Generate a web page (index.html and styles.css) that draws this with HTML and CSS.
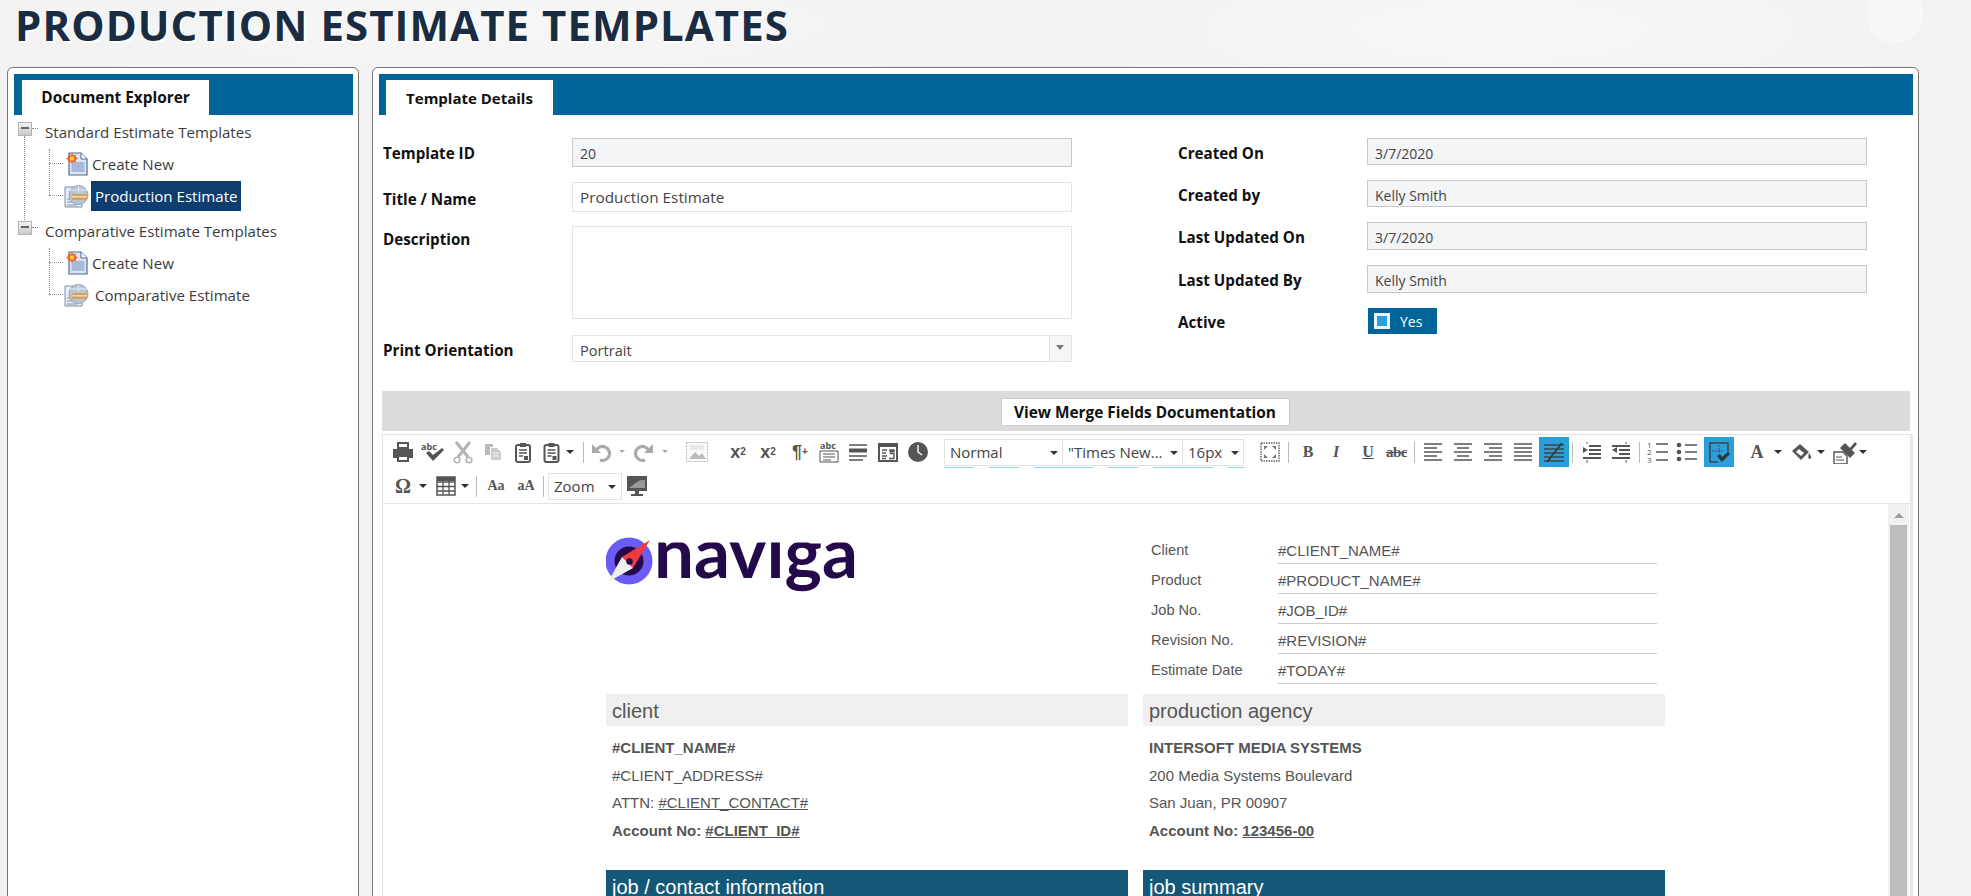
FILE: index.html
```html
<!DOCTYPE html>
<html lang="en">
<head>
    <meta charset="UTF-8">
    <title>Production Estimate Templates</title>
    <link rel="stylesheet" href="styles.css">
</head>
<body>
    <svg class="defs" xmlns="http://www.w3.org/2000/svg">
        <symbol id="i-newdoc" viewBox="0 0 22 24">
            <path d="M3 1h12l6 6v16H3z" fill="#dfe6f2" stroke="#4d6a92" stroke-width="1.2"/>
            <path d="M15 1v6h6" fill="#fff" stroke="#4d6a92"/>
            <rect x="5.5" y="10" width="13" height="10" fill="#a9b9dc"/>
            <path d="M6 1l1.5 2.5L10 2.5 9.5 5l2.5 1.5L9.500 8 10 10.500 7.500 9.500 6 12 4.500 9.500 2 10.500 2.500 8 0 6.500 2.500 5 2 2.500 4.500 3.500z" fill="#ef5d2a"/>
            <circle cx="6" cy="6.500" r="2.200" fill="#f8d22d"/>
        </symbol>
        <symbol id="i-globedoc" viewBox="0 0 25 24">
            <path d="M1 3h13l4 3v17H1z" fill="#e9eef5" stroke="#7d8ea6"/>
            <path d="M3 15h8M3 18h8M3 21h10" stroke="#7d8ea6"/>
            <circle cx="14.500" cy="11" r="9.500" fill="#b7c6d6" stroke="#98a4b2"/>
            <path d="M6 6h17M14.500 2v7" stroke="#e4eaf0" fill="none"/>
            <rect x="8" y="10" width="15" height="6" fill="#d3a263"/>
            <rect x="8" y="12" width="15" height="1.500" fill="#f1d9ae"/>
        </symbol>
        <symbol id="i-print" viewBox="0 0 24 24">
            <path d="M7 3h10v5H7z" fill="#fff" stroke="#555" stroke-width="2"/>
            <path d="M2 9h20v9h-4v-3H6v3H2z" fill="#555"/>
            <path d="M7 16h10v5H7z" fill="#fff" stroke="#555" stroke-width="2"/>
        </symbol>
        <symbol id="i-spell" viewBox="0 0 24 24">
            <text x="0" y="10" class="ic-small">abc</text>
            <path d="M5 13l3-2 4 4 9-7 2 2-11 11z" fill="#555"/>
        </symbol>
        <symbol id="i-cut" viewBox="0 0 24 24">
            <path d="M5 2l12 15M19 2L7 17" stroke="#b4b4b4" stroke-width="3" fill="none"/>
            <circle cx="6" cy="20" r="2.800" fill="none" stroke="#b4b4b4" stroke-width="1.600"/>
            <circle cx="18" cy="20" r="2.800" fill="none" stroke="#b4b4b4" stroke-width="1.600"/>
        </symbol>
        <symbol id="i-copy" viewBox="0 0 24 24">
            <path d="M4 4h8v3H9v8H4z" fill="#bbb"/>
            <path d="M10 8h6l4 4v8H10z" fill="#ccc"/>
            <path d="M12 13h6M12 16h6" stroke="#fff"/>
        </symbol>
        <symbol id="i-paste" viewBox="0 0 24 24">
            <rect x="5" y="5" width="14" height="17" rx="2" fill="#fff" stroke="#555" stroke-width="2"/>
            <path d="M9 3h6v4H9z" fill="#555"/>
            <path d="M8 10h8M8 13h8M8 16h4" stroke="#555" stroke-width="1.500"/>
            <rect x="13" y="16" width="4" height="4" fill="#555"/>
        </symbol>
        <symbol id="i-undo" viewBox="0 0 24 24">
            <path d="M6 11a7 7 0 1 1 4 9" fill="none" stroke="#aaa" stroke-width="3.200"/>
            <path d="M2 4v9h9z" fill="#aaa"/>
        </symbol>
        <symbol id="i-redo" viewBox="0 0 24 24">
            <path d="M18 11a7 7 0 1 0-4 9" fill="none" stroke="#aaa" stroke-width="3.200"/>
            <path d="M22 4v9h-9z" fill="#aaa"/>
        </symbol>
        <symbol id="i-image" viewBox="0 0 24 24">
            <rect x="1.500" y="2.500" width="21" height="19" fill="#fafafa" stroke="#bbb" stroke-dasharray="2 1"/>
            <path d="M4 19l6-7 4 4 3-3 4 6z" fill="#bbb"/>
            <rect x="5" y="5" width="14" height="5" fill="#e9e9e9"/>
        </symbol>
        <symbol id="i-abclines" viewBox="0 0 24 24">
            <text x="3" y="9" class="ic-small">abc</text>
            <path d="M3 11h18v11H3zM6 14h12M6 17h12M6 20h8" fill="none" stroke="#555"/>
        </symbol>
        <symbol id="i-lines" viewBox="0 0 24 24">
            <path d="M3 5h18M3 16h18M3 20h14" stroke="#555" stroke-width="1.500"/>
            <path d="M3 10.500h18" stroke="#555" stroke-width="4"/>
        </symbol>
        <symbol id="i-source" viewBox="0 0 24 24">
            <rect x="3" y="4" width="18" height="17" fill="#fff" stroke="#555" stroke-width="2"/>
            <path d="M3 4h18v3H3z" fill="#555"/>
            <path d="M6 10h5M6 13h4M6 16h5M6 18.500h4M13 10h5v1.500h-3.500v2H18v5h-5" fill="none" stroke="#555" stroke-width="1.400"/>
        </symbol>
        <symbol id="i-clock" viewBox="0 0 24 24">
            <circle cx="12" cy="12" r="10" fill="#555"/>
            <path d="M12 5v7l4 3" fill="none" stroke="#fff" stroke-width="1.400"/>
        </symbol>
        <symbol id="i-full" viewBox="0 0 24 24">
            <rect x="3" y="3" width="18" height="18" fill="none" stroke="#666" stroke-width="1.500" stroke-dasharray="1.500 1"/>
            <path d="M6 6h4l-4 4zM18 6v4l-4-4zM6 18v-4l4 4zM18 18h-4l4-4z" fill="#777"/>
        </symbol>
        <symbol id="i-left" viewBox="0 0 24 24">
            <path d="M3 4h18M3 8h13M3 12h18M3 16h13M3 20h18" stroke="#555" stroke-width="1.400"/>
        </symbol>
        <symbol id="i-center" viewBox="0 0 24 24">
            <path d="M3 4h18M6 8h12M3 12h18M6 16h12M3 20h18" stroke="#555" stroke-width="1.400"/>
        </symbol>
        <symbol id="i-right" viewBox="0 0 24 24">
            <path d="M3 4h18M8 8h13M3 12h18M8 16h13M3 20h18" stroke="#555" stroke-width="1.400"/>
        </symbol>
        <symbol id="i-just" viewBox="0 0 24 24">
            <path d="M3 4h18M3 8h18M3 12h18M3 16h18M3 20h18" stroke="#555" stroke-width="1.400"/>
        </symbol>
        <symbol id="i-nojust" viewBox="0 0 24 24">
            <path d="M2 5h20M2 9h20M2 13h20M2 17h20M2 21h20" stroke="#444" stroke-width="1.300"/>
            <path d="M5 22L20 3" stroke="#333" stroke-width="1.600"/>
        </symbol>
        <symbol id="i-indent" viewBox="0 0 24 24">
            <path d="M9 6h12M9 10h12M9 14h12M3 18h18" stroke="#555" stroke-width="2"/>
            <path d="M3 7l5 3-5 3z" fill="#555"/>
            <path d="M7 2v2M7 20v3" stroke="#555"/>
        </symbol>
        <symbol id="i-outdent" viewBox="0 0 24 24">
            <path d="M3 6h18M10 10h11M10 14h11M3 18h18" stroke="#555" stroke-width="2"/>
            <path d="M8 7l-5 3 5 3z" fill="#555"/>
            <path d="M17 2v2M17 20v3" stroke="#555"/>
        </symbol>
        <symbol id="i-ol" viewBox="0 0 24 24">
            <text x="1" y="7.500" class="ic-num">1</text>
            <text x="1" y="15" class="ic-num">2</text>
            <text x="1" y="22.500" class="ic-num">3</text>
            <path d="M10 4h12M10 12h12M10 20h12" stroke="#555" stroke-width="1.500"/>
        </symbol>
        <symbol id="i-ul" viewBox="0 0 24 24">
            <circle cx="4" cy="5" r="2.300" fill="#555"/>
            <circle cx="4" cy="12" r="2.300" fill="#555"/>
            <circle cx="4" cy="19" r="2.300" fill="#555"/>
            <path d="M10 5h12M10 12h12M10 19h12" stroke="#555" stroke-width="1.500"/>
        </symbol>
        <symbol id="i-gridcheck" viewBox="0 0 24 24">
            <path d="M3 22V3h18v11" fill="none" stroke="#444" stroke-width="1.500"/>
            <path d="M3 22h8" stroke="#444" stroke-width="1.500"/>
            <path d="M12 5v9M5 11h12" stroke="#444" stroke-dasharray="1.500 1.500"/>
            <path d="M10 16l3-2 2 3 6-5 2 2-8 8z" fill="#333"/>
        </symbol>
        <symbol id="i-fill" viewBox="0 0 24 24">
            <path d="M11 4l9 8-8 8-9-9z" fill="#555"/>
            <path d="M10 9l5 4-3 3-5-4z" fill="#fff"/>
            <path d="M20 13c2 3 3 5 1 6-2 0-2-3-1-6z" fill="#555"/>
        </symbol>
        <symbol id="i-brush" viewBox="0 0 24 24">
            <path d="M16 9l6-7 2 2-6 7z" fill="#555"/>
            <path d="M12 3l10 10-5 5L7 8z" fill="#555"/>
            <path d="M1 12h9l4 4v8H1z" fill="#fff" stroke="#555" stroke-width="1.400"/>
            <path d="M3 17h6M3 20h8" stroke="#555"/>
        </symbol>
        <symbol id="i-table" viewBox="0 0 24 24">
            <rect x="3" y="3" width="18" height="18" fill="#fff" stroke="#555" stroke-width="1.500"/>
            <path d="M3 8h18M3 12.500h18M3 17h18M9 3v18M15 3v18" stroke="#555" stroke-width="1.300"/>
            <rect x="3" y="3" width="18" height="4" fill="#555"/>
        </symbol>
        <symbol id="i-monitor" viewBox="0 0 24 24">
            <rect x="2" y="2" width="20" height="15" fill="#555"/>
            <path d="M4 14l8-6c3-2 5-2 8-2v8z" fill="#999"/>
            <path d="M10 17h4v3h-4zM6 20h12v2H6z" fill="#555"/>
        </symbol>
    </svg>

    <h1 class="page-title">PRODUCTION ESTIMATE TEMPLATES</h1>

    <div class="panels">
        <aside class="panel panel-left">
            <div class="tabstrip"><span class="tab tab-doc">Document Explorer</span></div>
            <div class="tree">
                <div class="tree-group">
                    <div class="tree-head"><span class="toggle"></span><span class="tree-label">Standard Estimate Templates</span></div>
                    <div class="tree-kids">
                        <div class="tree-row"><svg class="ic-new"><use href="#i-newdoc"/></svg><span class="tree-text">Create New</span></div>
                        <div class="tree-row"><svg class="ic-globe"><use href="#i-globedoc"/></svg><span class="tree-text selected">Production Estimate</span></div>
                    </div>
                </div>
                <div class="tree-group last">
                    <div class="tree-head"><span class="toggle"></span><span class="tree-label">Comparative Estimate Templates</span></div>
                    <div class="tree-kids">
                        <div class="tree-row"><svg class="ic-new"><use href="#i-newdoc"/></svg><span class="tree-text">Create New</span></div>
                        <div class="tree-row"><svg class="ic-globe"><use href="#i-globedoc"/></svg><span class="tree-text plain">Comparative Estimate</span></div>
                    </div>
                </div>
            </div>
        </aside>

        <main class="panel panel-right">
            <div class="tabstrip"><span class="tab tab-details">Template Details</span></div>

            <div class="details">
                <div class="form-col col-a">
                    <div class="form-row h29"><label class="lbl lbl-up">Template ID</label><div class="field locked">20</div></div>
                    <div class="form-row h30"><label class="lbl lbl-down">Title / Name</label><div class="field field-title">Production Estimate</div></div>
                    <div class="form-row h93 nudge-up"><label class="lbl lbl-top">Description</label><div class="field"></div></div>
                    <div class="form-row h27"><label class="lbl">Print Orientation</label><div class="field field-select">Portrait<span class="select-arrow"></span></div></div>
                </div>
                <div class="form-col col-b">
                    <div class="form-row h27"><label class="lbl">Created On</label><div class="field locked">3/7/2020</div></div>
                    <div class="form-row h27"><label class="lbl">Created by</label><div class="field locked">Kelly Smith</div></div>
                    <div class="form-row h28"><label class="lbl">Last Updated On</label><div class="field locked">3/7/2020</div></div>
                    <div class="form-row h28"><label class="lbl">Last Updated By</label><div class="field locked">Kelly Smith</div></div>
                    <div class="form-row h26"><label class="lbl">Active</label><div class="toggle-yes"><span class="check"></span>Yes</div></div>
                </div>
            </div>

            <div class="merge-band"><button class="merge-btn">View Merge Fields Documentation</button></div>

            <div class="editor">
                <div class="toolbar">
                    <div class="tb-row">
                        <svg class="tool"><use href="#i-print"/></svg>
                        <svg class="tool"><use href="#i-spell"/></svg>
                        <svg class="tool"><use href="#i-cut"/></svg>
                        <svg class="tool"><use href="#i-copy"/></svg>
                        <svg class="tool"><use href="#i-paste"/></svg>
                        <svg class="tool tool-27"><use href="#i-paste"/></svg>
                        <span class="caret"></span>
                        <span class="sep"></span>
                        <svg class="tool"><use href="#i-undo"/></svg>
                        <span class="caret caret-light"></span>
                        <svg class="tool ml1"><use href="#i-redo"/></svg>
                        <span class="caret caret-light ml2"></span>
                        <svg class="tool ml12"><use href="#i-image"/></svg>
                        <span class="tool tool-text ml11">x<sup>2</sup></span>
                        <span class="tool tool-text">x<sub>2</sub></span>
                        <span class="tool tool-text ml2">¶<small>+</small></span>
                        <svg class="tool tool-28"><use href="#i-abclines"/></svg>
                        <svg class="tool"><use href="#i-lines"/></svg>
                        <svg class="tool"><use href="#i-source"/></svg>
                        <svg class="tool"><use href="#i-clock"/></svg>
                        <div class="sel-group ml11">
                            <span class="sel sel-format">Normal<span class="caret caret-in"></span></span>
                            <span class="sel sel-font">"Times New...<span class="caret caret-in"></span></span>
                            <span class="sel sel-size">16px<span class="caret caret-in"></span></span>
                            <span class="sel-rule rule-1"></span>
                            <span class="sel-rule rule-2"></span>
                            <span class="sel-rule rule-3"></span>
                            <span class="sel-rule rule-4"></span>
                            <span class="sel-rule rule-5"></span>
                            <span class="sel-rule rule-6"></span>
                        </div>
                        <svg class="tool ml11"><use href="#i-full"/></svg>
                        <span class="sep sep-b"></span>
                        <span class="tool tool-serif ml4">B</span>
                        <span class="tool tool-serif tool-i">I</span>
                        <span class="tool tool-serif tool-u ml3">U</span>
                        <span class="tool tool-serif tool-strike">abc</span>
                        <span class="sep sep-c"></span>
                        <svg class="tool ml3"><use href="#i-left"/></svg>
                        <svg class="tool"><use href="#i-center"/></svg>
                        <svg class="tool"><use href="#i-right"/></svg>
                        <svg class="tool"><use href="#i-just"/></svg>
                        <svg class="tool tool-on ml1"><use href="#i-nojust"/></svg>
                        <span class="sep sep-d"></span>
                        <svg class="tool ml4"><use href="#i-indent"/></svg>
                        <svg class="tool tool-pull"><use href="#i-outdent"/></svg>
                        <span class="sep sep-d"></span>
                        <svg class="tool ml3"><use href="#i-ol"/></svg>
                        <svg class="tool tool-pull"><use href="#i-ul"/></svg>
                        <svg class="tool tool-on ml2"><use href="#i-gridcheck"/></svg>
                        <span class="tool tool-serif tool-a ml10">A</span>
                        <span class="caret ml3"></span>
                        <svg class="tool ml3"><use href="#i-fill"/></svg>
                        <span class="caret"></span>
                        <svg class="tool ml4"><use href="#i-brush"/></svg>
                        <span class="caret caret-back"></span>
                    </div>
                    <div class="tb-row">
                        <span class="tool tool-serif tool-omega">Ω</span>
                        <span class="caret"></span>
                        <svg class="tool tool-28 ml4"><use href="#i-table"/></svg>
                        <span class="caret"></span>
                        <span class="sep sep-f"></span>
                        <span class="tool tool-serif tool-aa">Aa</span>
                        <span class="tool tool-serif tool-aa">aA</span>
                        <span class="sep sep-g"></span>
                        <span class="sel sel-zoom">Zoom<span class="caret caret-in"></span></span>
                        <svg class="tool"><use href="#i-monitor"/></svg>
                    </div>
                </div>

                <div class="editor-body">
                    <div class="doc">
                        <div class="doc-top">
                            <svg class="logo" viewBox="0 0 250 60" xmlns="http://www.w3.org/2000/svg">
                                <defs><clipPath id="xh"><rect x="45" y="5.500" width="210" height="60"/></clipPath></defs>
                                <circle cx="23" cy="24" r="23.500" fill="#6c5cf6"/>
                                <circle cx="23" cy="24" r="14.500" fill="#240a4a"/>
                                <path d="M44 3L27 31 16 20z" fill="#ef3b40"/>
                                <path d="M2 45L16 20 27 31z" fill="#efefef"/>
                                <circle cx="23.500" cy="24.500" r="3.200" fill="#240a4a"/>
                                <g clip-path="url(#xh)"><text x="48" y="41" class="logo-word" textLength="204" lengthAdjust="spacingAndGlyphs">naviga</text></g>
                            </svg>
                            <div class="meta">
                                <div class="meta-row"><span class="meta-key">Client</span><span class="meta-val">#CLIENT_NAME#</span></div>
                                <div class="meta-row"><span class="meta-key">Product</span><span class="meta-val">#PRODUCT_NAME#</span></div>
                                <div class="meta-row"><span class="meta-key">Job No.</span><span class="meta-val">#JOB_ID#</span></div>
                                <div class="meta-row"><span class="meta-key">Revision No.</span><span class="meta-val">#REVISION#</span></div>
                                <div class="meta-row"><span class="meta-key">Estimate Date</span><span class="meta-val">#TODAY#</span></div>
                            </div>
                        </div>
                        <div class="doc-cols">
                            <section>
                                <h2 class="sec-head">client</h2>
                                <p class="sec-line"><b>#CLIENT_NAME#</b></p>
                                <p class="sec-line">#CLIENT_ADDRESS#</p>
                                <p class="sec-line">ATTN: <u>#CLIENT_CONTACT#</u></p>
                                <p class="sec-line"><b>Account No: <u>#CLIENT_ID#</u></b></p>
                            </section>
                            <section>
                                <h2 class="sec-head">production agency</h2>
                                <p class="sec-line"><b>INTERSOFT MEDIA SYSTEMS</b></p>
                                <p class="sec-line">200 Media Systems Boulevard</p>
                                <p class="sec-line">San Juan, PR 00907</p>
                                <p class="sec-line"><b>Account No: <u>123456-00</u></b></p>
                            </section>
                            <section><h2 class="sec-head sec-dark">job / contact information</h2></section>
                            <section><h2 class="sec-head sec-dark">job summary</h2></section>
                        </div>
                    </div>
                    <div class="scrollbar"><span class="scroll-up"></span><span class="scroll-thumb"></span></div>
                </div>
            </div>
        </main>
    </div>
</body>
</html>
```

FILE: styles.css
```css
html, body {
    margin: 0;
    height: 896px;
    overflow: hidden;
}
body {
    background-color: #f2f2f2;
    background-image:
        radial-gradient(circle 29px at 1895px 15px, #f8f8f8 94%, transparent 100%),
        radial-gradient(ellipse 420px 90px at 1500px 30px, #f8f8f8, transparent),
        radial-gradient(ellipse 500px 70px at 500px 25px, #f7f7f7, transparent);
    font-family: "Open Sans", "Noto Sans", sans-serif;
    color: #333;
}
.defs {
    display: none;
}
.ic-small {
    font: bold 9px "Open Sans", sans-serif;
    fill: #555;
}
.ic-num {
    font: 8px "Open Sans", sans-serif;
    fill: #555;
}

.page-title {
    margin: 0;
    padding: 0 0 0 15px;
    height: 67px;
    line-height: 49px;
    font-size: 42px;
    font-weight: 700;
    letter-spacing: 1.05px;
    color: #1a2c42;
    text-shadow: 1px 1px 0 #fff, 2px 2px 1px #fff;
}

.panels {
    display: flex;
    gap: 13px;
    padding-left: 7px;
}
.panel {
    box-sizing: border-box;
    height: 900px;
    background: #fff;
    border: 1px solid #777;
    border-radius: 6px;
    padding: 6px 5px 0 6px;
}
.panel-left {
    width: 352px;
}
.panel-right {
    width: 1547px;
}
.tabstrip {
    display: flex;
    align-items: flex-end;
    height: 41px;
    background: #006699;
}
.tab {
    display: flex;
    align-items: center;
    justify-content: center;
    height: 35px;
    background: #fff;
    font-weight: 700;
    color: #111;
}
.tab-doc {
    width: 187px;
    margin-left: 8px;
    font-size: 15.400px;
}
.tab-details {
    width: 167px;
    margin-left: 7px;
    font-size: 15px;
}

/* tree */
.tree {
    padding-top: 5px;
    font-size: 15.100px;
}
.tree-group {
    position: relative;
    height: 99px;
}
.tree-group::before {
    content: "";
    position: absolute;
    left: 10px;
    top: 16px;
    height: 84px;
    border-left: 1px dotted #888;
}
.tree-group.last::before {
    display: none;
}
.tree-head {
    display: flex;
    align-items: center;
    height: 24px;
    padding-left: 4px;
}
.toggle {
    box-sizing: border-box;
    position: relative;
    align-self: flex-start;
    margin-top: 2px;
    width: 14px;
    height: 14px;
    background: linear-gradient(#f4f4f4, #c9c9c9);
    border: 1px solid #b5b5b5;
}
.toggle::before {
    content: "";
    position: absolute;
    left: 2px;
    top: 4px;
    width: 8px;
    height: 2px;
    background: #666;
}
.toggle::after {
    content: "";
    position: absolute;
    left: 13px;
    top: 5px;
    width: 6px;
    border-top: 1px dotted #888;
}
.tree-label {
    margin-left: 13px;
    color: #3c3c3c;
}
.tree-kids {
    position: relative;
    padding-top: 4px;
}
.tree-kids::before {
    content: "";
    position: absolute;
    left: 35px;
    top: 5px;
    height: 46px;
    border-left: 1px dotted #888;
}
.tree-row {
    position: relative;
    display: flex;
    align-items: center;
    height: 32px;
    padding-left: 52px;
}
.tree-row::before {
    content: "";
    position: absolute;
    left: 35px;
    top: 15px;
    width: 14px;
    border-top: 1px dotted #888;
}
.ic-new {
    width: 22px;
    height: 24px;
}
.ic-globe {
    width: 25px;
    height: 24px;
    margin-left: -2px;
}
.tree-text {
    margin-left: 4px;
    color: #3c3c3c;
}
.tree-text.selected {
    margin-left: 2px;
    padding: 0 4px 0 4px;
    line-height: 30px;
    background: #0f3d6e;
    color: #fff;
}
.tree-text.plain {
    margin-left: 6px;
}

/* form */
.details {
    display: flex;
    padding-top: 23px;
    height: 276px;
    box-sizing: border-box;
}
.form-col {
    display: flex;
    flex-direction: column;
    gap: 15px;
}
.col-a {
    width: 689px;
    padding-left: 4px;
}
.col-b {
    width: 689px;
    margin-left: 106px;
}
.form-row {
    display: flex;
    align-items: center;
}
.nudge-up {
    margin-top: -1px;
    margin-bottom: 1px;
}
.h26 { height: 26px; }
.h27 { height: 27px; }
.h28 { height: 28px; }
.h29 { height: 29px; }
.h30 { height: 30px; }
.h93 { height: 93px; }
.lbl {
    flex: none;
    width: 189px;
    padding-top: 2px;
    font-size: 15.200px;
    font-weight: 700;
    color: #111;
}
.lbl-up {
    padding-top: 0;
}
.lbl-down {
    padding-top: 4px;
}
.col-b .lbl {
    padding-top: 2px;
}
.lbl-top {
    align-self: flex-start;
    padding-top: 3px;
}
.field {
    box-sizing: border-box;
    position: relative;
    flex: 1;
    height: 100%;
    border: 1px solid #e3e3e3;
    padding: 3px 7px 0;
    font-size: 14px;
    line-height: 23px;
    color: #444;
}
.field-title {
    font-size: 15.300px;
}
.field-select {
    font-size: 14.600px;
}
.field.locked {
    background: #f4f5f7;
    border-color: #c8c8c8;
}
.select-arrow {
    position: absolute;
    right: 0;
    top: 0;
    bottom: 0;
    width: 21px;
    background: #f6f6f6;
    border-left: 1px solid #e3e3e3;
}
.select-arrow::after {
    content: "";
    position: absolute;
    left: 6px;
    top: 9px;
    border: 4px solid transparent;
    border-top: 5px solid #777;
    border-bottom: 0;
}
.toggle-yes {
    display: flex;
    align-items: center;
    width: 69px;
    height: 26px;
    margin-left: 1px;
    background: #006699;
    color: #fff;
    font-size: 14px;
}
.check {
    box-sizing: border-box;
    width: 16px;
    height: 16px;
    margin: 0 10px 0 6px;
    background: #27a0dc;
    border: 3px solid #eef4f8;
}

/* merge band */
.merge-band {
    box-sizing: border-box;
    display: flex;
    justify-content: center;
    align-items: center;
    height: 40px;
    margin: 0 3px 0 3px;
    padding: 2px 2px 0 0;
    background: #dcdcdc;
}
.merge-btn {
    width: 289px;
    height: 28px;
    border: 1px solid #ccc;
    background: #fff;
    font-family: "Open Sans", sans-serif;
    font-size: 15.400px;
    font-weight: 700;
    color: #111;
}

/* editor */
.editor {
    margin: 3px 2px 0 3px;
    border-left: 1px solid #e3e3e3;
    border-top: 1px solid #e3e3e3;
    border-right: 1px solid #e3e3e3;
    box-shadow: 2px 0 0 #e9e9e9;
}
.toolbar {
    height: 68px;
    border-bottom: 1px solid #e3e3e3;
}
.tb-row {
    display: flex;
    align-items: center;
    height: 34px;
    padding-left: 5px;
}
.tool {
    flex: none;
    width: 30px;
    height: 30px;
    padding: 3px;
    box-sizing: border-box;
}
.tool-27 {
    width: 27px;
    padding: 3px 1px;
}
.tool-28 {
    width: 28px;
    padding: 3px 2px;
}
.tool-on {
    background: #27a0dc;
}
.tool-pull {
    margin-left: -1px;
}
.ml1 { margin-left: 1px; }
.ml2 { margin-left: 2px; }
.ml3 { margin-left: 3px; }
.ml4 { margin-left: 4px; }
.ml10 { margin-left: 10px; }
.ml11 { margin-left: 11px; }
.ml12 { margin-left: 12px; }
.caret {
    flex: none;
    position: relative;
    width: 10px;
    height: 30px;
}
.caret::after {
    content: "";
    position: absolute;
    left: 1px;
    top: 13px;
    border: 4px solid transparent;
    border-top: 4px solid #333;
    border-bottom: 0;
}
.caret-light::after {
    left: 2px;
    border-width: 3px;
    border-top-color: #aaa;
    border-bottom: 0;
}
.caret-back {
    margin-left: -2px;
}
.caret-in {
    position: absolute;
    top: 0;
    right: 4px;
    width: 8px;
    height: 25px;
}
.caret-in::after {
    left: 0;
    top: 11px;
}
.sep {
    flex: none;
    width: 1px;
    height: 21px;
    margin: 0 3px 0 8px;
    background: #bbb;
}
.sep-b { margin: 0 0 0 3px; }
.sep-c { margin: 0 0 0 3px; }
.sep-d { margin: 0 0 0 3px; }
.sep-f { margin: 0 4px 0 6px; }
.sep-g { margin: 0 4px 0 2px; }
.tool-text {
    display: flex;
    align-items: center;
    justify-content: center;
    font: bold 18px "Liberation Sans", sans-serif;
    color: #555;
}
.tool-text sup,
.tool-text sub,
.tool-text small {
    font-size: 10px;
    line-height: 0;
}
.tool-serif {
    display: flex;
    align-items: center;
    justify-content: center;
    font: bold 16px "Liberation Serif", serif;
    color: #555;
}
.tool-i {
    font-style: italic;
    margin-left: -2px;
}
.tool-u {
    text-decoration: underline;
    width: 28px;
}
.tool-strike {
    width: 29px;
    font-size: 15px;
    text-decoration: line-through;
    letter-spacing: -0.5px;
}
.tool-a {
    width: 26px;
    font-size: 18px;
}
.tool-omega {
    font-size: 20px;
}
.tool-aa {
    font-size: 14px;
}
.sel-group {
    position: relative;
    display: flex;
    flex: none;
    border: 1px solid #e3e3e3;
    height: 27px;
    box-sizing: border-box;
}
.sel {
    position: relative;
    box-sizing: border-box;
    display: block;
    height: 25px;
    padding-left: 5px;
    font-size: 15px;
    line-height: 25px;
    color: #444;
    white-space: nowrap;
}
.sel-format { width: 118px; border-right: 1px solid #e3e3e3; }
.sel-font { width: 120px; border-right: 1px solid #e3e3e3; }
.sel-size { width: 60px; }
.sel-zoom {
    width: 74px;
    height: 27px;
    border: 1px solid #e3e3e3;
    flex: none;
}
.sel-zoom .caret-in {
    right: 5px;
}
.sel-rule {
    position: absolute;
    bottom: -3px;
    height: 1px;
    background: #8dd3ee;
}
.rule-1 { left: -1px; width: 30px; }
.rule-2 { left: 44px; width: 30px; }
.rule-3 { left: 89px; width: 59px; }
.rule-4 { left: 163px; width: 30px; }
.rule-5 { left: 208px; width: 60px; }
.rule-6 { left: 283px; width: 16px; }

.editor-body {
    display: flex;
    height: 400px;
}
.doc {
    flex: none;
    width: 1505px;
    padding-left: 223px;
    font-family: "Liberation Sans", Arial, sans-serif;
    color: #555;
    box-sizing: border-box;
}
.doc-top {
    display: flex;
    height: 190px;
}
.logo {
    flex: none;
    width: 250px;
    height: 60px;
    margin-top: 33px;
}
.logo-word {
    font: 700 71px Lato, sans-serif;
    fill: #240a4a;
}
.meta {
    width: 514px;
    margin: 30px 0 0 287px;
}
.meta-row {
    display: flex;
    height: 30px;
    padding-left: 8px;
    box-sizing: border-box;
    line-height: 33px;
}
.meta-key {
    flex: none;
    width: 127px;
    font-size: 14.600px;
}
.meta-val {
    box-sizing: border-box;
    width: 379px;
    border-bottom: 1px solid #ccc;
    font-size: 15px;
}
.doc-cols {
    display: grid;
    grid-template-columns: 522px 522px;
    column-gap: 15px;
}
.sec-head {
    margin: 0;
    height: 32px;
    padding-left: 6px;
    background: #f0f0f0;
    font-size: 20px;
    font-weight: 400;
    line-height: 34px;
    color: #555;
}
.sec-dark {
    background: #145877;
    color: #fff;
}
.sec-line {
    margin: 0;
    padding-left: 6px;
    height: 27.500px;
    font-size: 15px;
    line-height: 27.500px;
}
.sec-line:first-of-type {
    margin-top: 8px;
}
.doc-cols section:nth-child(-n+2) {
    height: 176px;
}
.scrollbar {
    flex: none;
    position: relative;
    width: 21px;
    background: #f1f1f1;
}
.scroll-up {
    position: absolute;
    left: 6px;
    top: 9px;
    border: 5px solid transparent;
    border-bottom: 5px solid #a0a0a0;
    border-top: 0;
}
.scroll-thumb {
    position: absolute;
    left: 2px;
    right: 2px;
    top: 21px;
    bottom: 0;
    background: #bdbdbd;
}
```
